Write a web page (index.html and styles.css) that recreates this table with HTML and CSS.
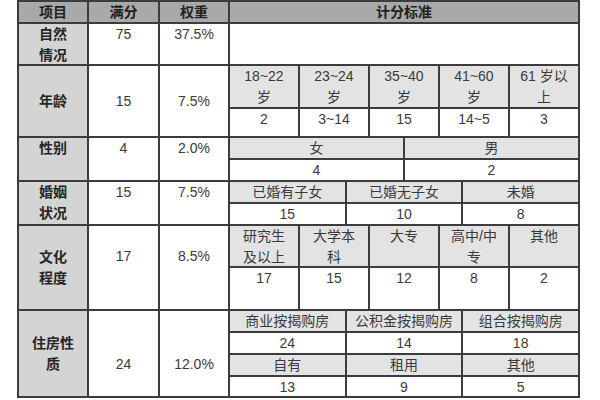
FILE: index.html
```html
<!DOCTYPE html>
<html lang="zh">
<head>
<meta charset="utf-8">
<link rel="stylesheet" href="styles.css">
</head>
<body>
<div class="sheet">
  <div class="c hd">项目</div>
  <div class="c hd">满分</div>
  <div class="c hd">权重</div>
  <div class="c hd">计分标准</div>

  <div class="c lb">自然<br>情况</div>
  <div class="c">75</div>
  <div class="c">37.5%</div>
  <div class="c"></div>

  <div class="c lb mid">年龄</div>
  <div class="c mid">15</div>
  <div class="c mid">7.5%</div>
  <div class="sub age">
    <div class="c sh">18~22<br>岁</div>
    <div class="c sh">23~24<br>岁</div>
    <div class="c sh">35~40<br>岁</div>
    <div class="c sh">41~60<br>岁</div>
    <div class="c sh">61 岁以<br>上</div>
    <div class="c">2</div>
    <div class="c">3~14</div>
    <div class="c">15</div>
    <div class="c">14~5</div>
    <div class="c">3</div>
  </div>

  <div class="c lb">性别</div>
  <div class="c">4</div>
  <div class="c">2.0%</div>
  <div class="sub sex">
    <div class="c sh row20">女</div>
    <div class="c sh row20">男</div>
    <div class="c row20">4</div>
    <div class="c row20">2</div>
  </div>

  <div class="c lb">婚姻<br>状况</div>
  <div class="c">15</div>
  <div class="c">7.5%</div>
  <div class="sub marry">
    <div class="c sh row20">已婚有子女</div>
    <div class="c sh row20">已婚无子女</div>
    <div class="c sh row20">未婚</div>
    <div class="c row20">15</div>
    <div class="c row20">10</div>
    <div class="c row20">8</div>
  </div>

  <div class="c lb mid">文化<br>程度</div>
  <div class="c edu-num">17</div>
  <div class="c edu-num">8.5%</div>
  <div class="sub edu">
    <div class="c sh">研究生<br>及以上</div>
    <div class="c sh">大学本<br>科</div>
    <div class="c sh">大专</div>
    <div class="c sh">高中/中<br>专</div>
    <div class="c sh">其他</div>
    <div class="c">17</div>
    <div class="c">15</div>
    <div class="c">12</div>
    <div class="c">8</div>
    <div class="c">2</div>
  </div>

  <div class="c lb mid">住房性<br>质</div>
  <div class="c house-num">24</div>
  <div class="c house-num">12.0%</div>
  <div class="sub house">
    <div class="c sh row20">商业按揭购房</div>
    <div class="c sh row20">公积金按揭购房</div>
    <div class="c sh row20">组合按揭购房</div>
    <div class="c row20">24</div>
    <div class="c row20">14</div>
    <div class="c row20">18</div>
    <div class="c sh row20">自有</div>
    <div class="c sh row20">租用</div>
    <div class="c sh row20">其他</div>
    <div class="c row20">13</div>
    <div class="c row20">9</div>
    <div class="c row20">5</div>
  </div>
</div>
</body>
</html>
```

FILE: styles.css
```css
html, body {
  margin: 0;
  padding: 0;
  background: #ffffff;
}

body {
  font-family: "Liberation Sans", "Noto Sans CJK SC", sans-serif;
  font-size: 14px;
  color: #3a3a3a;
}

.sheet {
  display: grid;
  grid-template-columns: 68px 69px 68px 348px;
  grid-template-rows: 20px 40px 70px 42px 42px 83px 85px;
  gap: 2px;
  padding: 2px;
  width: max-content;
  margin-left: 17px;
  background: #3c3c3c;
}

.c {
  background: #ffffff;
  text-align: center;
  line-height: 21px;
  overflow: hidden;
}

.hd {
  background: #a9a9a9;
  font-weight: bold;
  color: #222222;
  line-height: 20px;
}

.lb {
  background: #d4d4d4;
  font-weight: bold;
  color: #262626;
}

.sh {
  background: #e3e3e3;
}

.mid {
  display: flex;
  flex-direction: column;
  justify-content: center;
}

.row20 {
  line-height: 20px;
}

.edu-num {
  padding-top: 20px;
}

.house-num {
  padding-top: 43px;
}

.sub {
  display: grid;
  gap: 2px;
  background: #3c3c3c;
}

.age {
  grid-template-columns: repeat(5, 1fr);
  grid-template-rows: 41px 27px;
}

.sex {
  grid-template-columns: 1fr 1fr;
  grid-template-rows: 20px 20px;
}

.marry {
  grid-template-columns: repeat(3, 1fr);
  grid-template-rows: 20px 20px;
}

.edu {
  grid-template-columns: repeat(5, 1fr);
  grid-template-rows: 40px 41px;
}

.house {
  grid-template-columns: repeat(3, 1fr);
  grid-template-rows: 20px 20px 20px 19px;
}
```
